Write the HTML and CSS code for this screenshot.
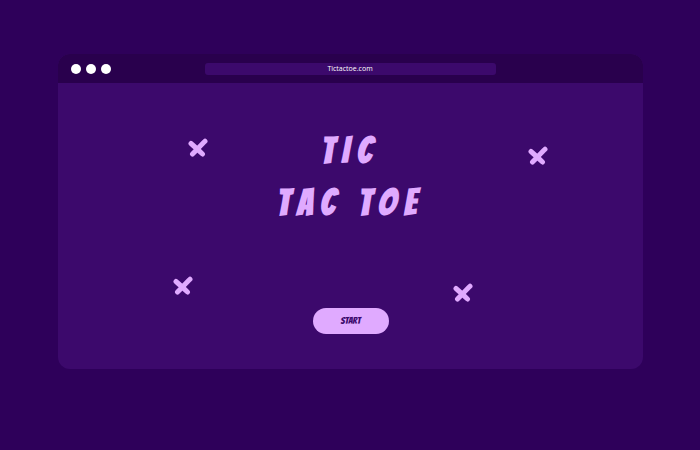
FILE: index.html
```html
<!DOCTYPE html>
<html lang="en">
<head>
    <meta charset="UTF-8">
    <meta name="viewport" content="width=device-width, initial-scale=1.0">
    <title>Tic Tac Toe</title>
    <link rel="stylesheet" href="styles.css">
</head>
<body>
    <div class="window">
        <header class="top-bar">
            <div class="dots">
                <span class="dot"></span>
                <span class="dot"></span>
                <span class="dot"></span>
            </div>
            <div class="address">Tictactoe.com</div>
        </header>

        <main class="board">
            <svg class="cross cross-1" viewBox="0 0 20 20" aria-hidden="true"><path d="M3 5.500 C6 8 10 12 14.500 16 M17 3.200 C13 7 8.500 12 4.500 16"/></svg>
            <svg class="cross cross-2" viewBox="0 0 20 20" aria-hidden="true"><path d="M3 5.500 C6 8 10 12 14.500 16 M17 3.200 C13 7 8.500 12 4.500 16"/></svg>
            <svg class="cross cross-3" viewBox="0 0 20 20" aria-hidden="true"><path d="M3 5.500 C6 8 10 12 14.500 16 M17 3.200 C13 7 8.500 12 4.500 16"/></svg>
            <svg class="cross cross-4" viewBox="0 0 20 20" aria-hidden="true"><path d="M3 5.500 C6 8 10 12 14.500 16 M17 3.200 C13 7 8.500 12 4.500 16"/></svg>

            <h1 class="title">TIC<br>TAC TOE</h1>
            <button type="button" class="start">START</button>
        </main>
    </div>
</body>
</html>
```
FILE: styles.css
```css
* {
    margin: 0;
    padding: 0;
    box-sizing: border-box;
}

body {
    padding: 54px 57px 54px 58px;
    background: #2e005a;
    font-family: "Open Sans", "Noto Sans", sans-serif;
}

.window {
    background: #3c096c;
    border-radius: 12px;
    overflow: hidden;
}

.top-bar {
    display: grid;
    grid-template-columns: 1fr 2fr 1fr;
    align-items: center;
    padding: 9px 2px 8px 1px;
    background: #29004d;
}

.dots {
    display: flex;
    gap: 5px;
    padding-left: 12px;
}

.dot {
    width: 10px;
    height: 10px;
    border-radius: 50%;
    background: #fff;
}

.address {
    border-radius: 3px;
    background: #3c096c;
    color: #fff;
    font-size: 7px;
    font-weight: 500;
    line-height: 12px;
    text-align: center;
}

.board {
    position: relative;
    display: flex;
    flex-direction: column;
    align-items: center;
    padding: 42px 0 35px;
}

.title {
    margin-bottom: 79px;
    color: #e0aaff;
    font-family: "Bangers", "Liberation Sans Narrow", "DejaVu Sans Condensed", sans-serif;
    font-size: 36px;
    font-weight: bold;
    letter-spacing: 8px;
    line-height: 52px;
    text-align: center;
}

.start {
    padding: 0 28px;
    border: none;
    border-radius: 13px;
    background: #e0aaff;
    color: #3c096c;
    font-family: "Bangers", "Liberation Sans Narrow", "DejaVu Sans Condensed", sans-serif;
    font-size: 10px;
    font-weight: normal;
    line-height: 26px;
    cursor: pointer;
}

.start:hover {
    background: #c77dff;
}

/* crosses scattered around the title */
.cross {
    position: absolute;
    width: 20px;
    height: 20px;
    fill: none;
    stroke: #e0aaff;
    stroke-width: 5;
    stroke-linecap: round;
}

.cross-1 {
    top: 19.4%;
    left: 22.2%;
}

.cross-2 {
    top: 22%;
    right: 16.2%;
}

.cross-3 {
    top: 67.4%;
    left: 19.6%;
}

.cross-4 {
    top: 70%;
    right: 29%;
}
```
